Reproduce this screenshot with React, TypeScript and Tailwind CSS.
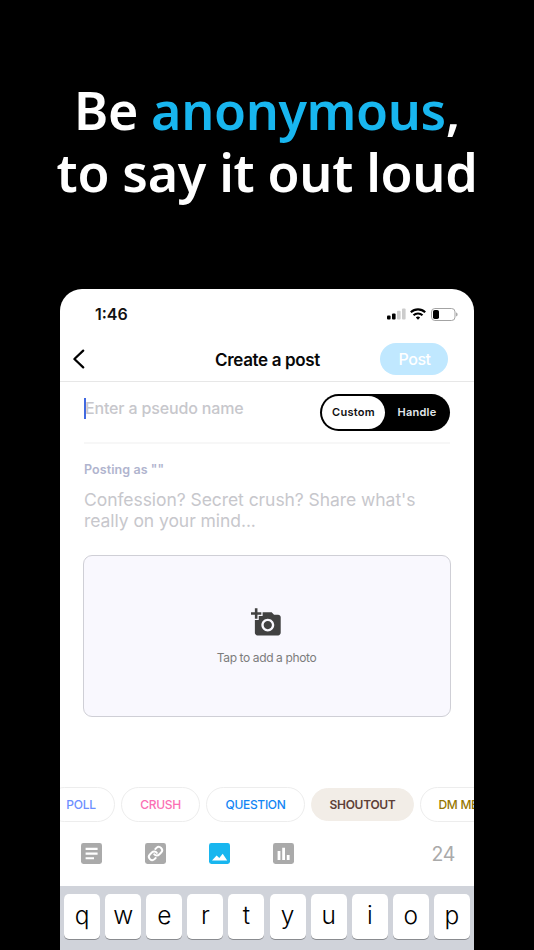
import clsx from "clsx";
import { MdAddAPhoto } from "react-icons/md";

interface Tag {
  label: string;
  className: string;
}

const TAGS: Tag[] = [
  { label: "POLL", className: "h-[35px] w-[68px] justify-center border-[#ededed] text-[#6d8eff] font-medium" },
  { label: "CRUSH", className: "h-[35px] w-[79px] justify-center border-[#ededed] text-[#fb6fb4] font-medium" },
  { label: "QUESTION", className: "h-[35px] w-[99px] justify-center border-[#ededed] text-[#1386f4] font-medium" },
  { label: "SHOUTOUT", className: "h-[33px] w-[103px] justify-center border-[#f2ede7] bg-[#f2ede7] text-[#5d4037] font-semibold" },
  { label: "DM ME", className: "h-[35px] w-[80px] border-[#ededed] pl-[17.5px] text-[#977700] font-medium" },
];

const KEYS = ["q", "w", "e", "r", "t", "y", "u", "i", "o", "p"];

export default function App() {
  return (
    <div className="flex h-[950px] w-[534px] flex-col items-center overflow-hidden bg-black font-['Inter',sans-serif]">
      <h1 className="h-[289px] w-full shrink-0 pt-[79px] text-center font-['Noto_Sans',sans-serif] text-[52px] leading-[62px] font-semibold whitespace-nowrap text-white">
        <span className="block tracking-[-0.38px]">
          Be <span className="text-[#18b6ef]">anonymous</span>,
        </span>
        <span className="block tracking-[-0.32px]">to say it out loud</span>
      </h1>

      <main className="flex h-[661px] w-[414px] shrink-0 flex-col overflow-hidden rounded-t-[22px] bg-white">
        <StatusBar />
        <Header />
        <Composer />
        <TagList />
        <Toolbar />
        <Keyboard />
      </main>
    </div>
  );
}

function StatusBar() {
  return (
    <div className="flex h-[50px] shrink-0 items-center justify-between pr-[16px] pl-[35px]">
      <span className="text-[16px] font-semibold text-[#111]">1:46</span>
      <div className="flex items-center gap-[4px]">
        <svg width="19" height="12" viewBox="0 0 19 12">
          <rect x="0" y="7.4" width="3.6" height="4.2" rx="1" fill="#000" />
          <rect x="5" y="5.4" width="3.6" height="6.2" rx="1" fill="#000" />
          <rect x="10" y="2.8" width="3.6" height="8.8" rx="1" fill="#ccc" />
          <rect x="15" y="0.4" width="3.6" height="11.2" rx="1" fill="#ccc" />
        </svg>
        <svg width="16" height="12" viewBox="0 0 16 12" fill="none" stroke="#000" strokeWidth="2.1">
          <path d="M.8 4.3a10.3 10.3 0 0 1 14.4 0" />
          <path d="M3.5 7.3a6.4 6.4 0 0 1 9 0" />
          <path d="M8 11.8 5.8 9.5a3.2 3.2 0 0 1 4.4 0z" fill="#000" stroke="none" />
        </svg>
        <svg className="ml-px" width="27" height="13" viewBox="0 0 27 13">
          <rect x="0.5" y="0.5" width="23.5" height="12" rx="3.4" fill="none" stroke="#a3a3a3" />
          <rect x="2" y="2" width="6" height="9" rx="1.8" fill="#000" />
          <path d="M25.2 4.6v3.8c.9-.3 1.3-1 1.3-1.9s-.4-1.6-1.3-1.9z" fill="#999" />
        </svg>
      </div>
    </div>
  );
}

function Header() {
  return (
    <header className="grid h-[43px] shrink-0 grid-cols-[1fr_auto_1fr] items-center border-b border-[#e7e7e7] pr-[26px] pb-[2px] pl-[13px]">
      <button type="button" aria-label="Back">
        <svg width="12" height="20" viewBox="0 0 12 20" fill="none" stroke="#000" strokeWidth="2.2" strokeLinecap="round" strokeLinejoin="round">
          <path d="M10.2 1.6 1.4 10l8.8 8.4" />
        </svg>
      </button>
      <h2 className="ml-[14px] pt-[3px] text-[17px] font-semibold tracking-[-0.35px] text-[#080808]">Create a post</h2>
      <button type="button" className="h-8 w-[68px] justify-self-end rounded-full bg-[#c0e8ff] pl-px text-[16px] font-medium tracking-[-0.5px] text-white">
        Post
      </button>
    </header>
  );
}

function Composer() {
  return (
    <section className="flex h-[405px] shrink-0 flex-col px-6">
      <div className="flex h-[62px] shrink-0 items-center justify-between border-b-2 border-[#f7f7f7]">
        <div className="mb-[8px] flex h-[21px] items-center border-l-2 border-[#4169e1] text-[16px] font-medium tracking-[-0.15px] whitespace-nowrap text-[#c7c7cc]">
          <span className="-ml-px">Enter a pseudo name</span>
        </div>
        <div className="flex h-[37px] w-[130px] rounded-full bg-black p-[2px] text-[11px] font-semibold tracking-[0.25px]">
          <span className="flex w-[63px] items-center justify-center rounded-full bg-white text-[#111]">Custom</span>
          <span className="flex flex-1 items-center justify-center pl-px text-[#e3e8ed]">Handle</span>
        </div>
      </div>
      <p className="mt-[17px] h-[18px] text-[12.5px] leading-[18px] font-semibold tracking-[0.08px] text-[#b0b4ce]">Posting as ""</p>
      <p className="mt-[10px] text-[17.5px] leading-[21px] tracking-[-0.06px] whitespace-nowrap text-[#c7c7cc]">
        Confession? Secret crush? Share what's
        <br />
        really on your mind...
      </p>
      <div className="-ml-px mt-[24px] flex h-[162px] w-[368px] shrink-0 flex-col items-center rounded-[9px] border border-[#cfcfd6] bg-[#f9f8fe] pt-[51px]">
        <MdAddAPhoto className="mr-px size-[31px] text-[#414141]" />
        <span className="mt-[11px] mr-px text-[12px] leading-[18px] tracking-[-0.38px] text-[#7c7c7c]">Tap to add a photo</span>
      </div>
    </section>
  );
}

function TagList() {
  return (
    <div className="flex h-[35px] shrink-0 items-center gap-[6px] overflow-hidden">
      {TAGS.map((tag, i) => (
        <span
          key={tag.label}
          className={clsx(
            "flex shrink-0 items-center rounded-full border-[1.5px] text-[12px] tracking-[-0.3px] whitespace-nowrap",
            i === 0 && "-ml-[13px]",
            tag.className,
          )}
        >
          {tag.label}
        </span>
      ))}
    </div>
  );
}

function Toolbar() {
  return (
    <div className="flex h-[64px] shrink-0 items-center pr-[19px] pb-px pl-[21px]">
      <div className="flex flex-1 gap-[43px]">
        <svg width="21" height="21" viewBox="0 0 21 21">
          <rect width="21" height="21" rx="2.4" fill="#aaa" />
          <path d="M4.6 5.9h12M4.6 10.6h12M4.6 15.3h8.4" stroke="#fff" strokeWidth="2.1" />
        </svg>
        <svg width="21" height="21" viewBox="0 0 21 21">
          <rect width="21" height="21" rx="2.4" fill="#aaa" />
          <g transform="translate(2.6 2.6) scale(.66)" fill="none" stroke="#fff" strokeWidth="3" strokeLinecap="round">
            <path d="M10 13a5 5 0 0 0 7.54.54l3-3a5 5 0 0 0-7.07-7.07l-1.72 1.71" />
            <path d="M14 11a5 5 0 0 0-7.54-.54l-3 3a5 5 0 0 0 7.07 7.07l1.71-1.71" />
          </g>
        </svg>
        <svg width="21" height="21" viewBox="0 0 21 21">
          <rect width="21" height="21" rx="2.4" fill="#18b6ef" />
          <path d="m3 17.4 4.6-4.8 2.7 2.5 3.4-4.4 4.5 6.7z" fill="#fff" />
        </svg>
        <svg width="21" height="21" viewBox="0 0 21 21">
          <rect width="21" height="21" rx="2.4" fill="#aaa" />
          <path d="M6 8v9M10.6 4.8V17M15.2 12v5" stroke="#fff" strokeWidth="2.8" />
        </svg>
      </div>
      <span className="pt-[2px] text-[19.5px] tracking-[-0.3px] text-[#aaa]">24</span>
    </div>
  );
}

function Keyboard() {
  return (
    <div className="flex flex-1 items-start gap-[5.1px] bg-[#d0d3da] px-[4px] pt-[8px]">
      {KEYS.map((key) => (
        <span
          key={key}
          className="flex h-[45px] flex-1 justify-center rounded-[5px] bg-white text-[24.5px] leading-[42px] font-light text-black shadow-[0_1px_0_#898b8f]"
        >
          {key}
        </span>
      ))}
    </div>
  );
}
